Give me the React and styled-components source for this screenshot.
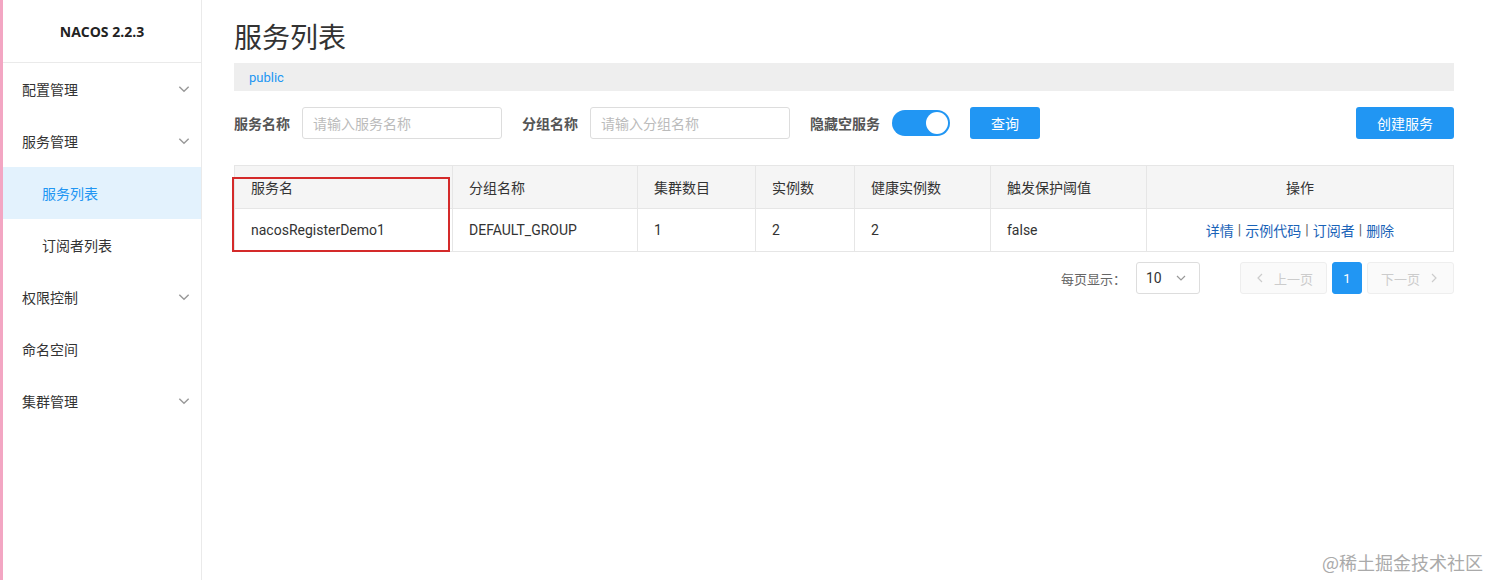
import styled, { createGlobalStyle } from "styled-components";

const GlobalStyle = createGlobalStyle`
  html, body {
    margin: 0;
    padding: 0;
    background: #fff;
    font-family: Roboto, "Noto Sans CJK SC", sans-serif;
    color: #333;
  }
`;

const Page = styled.div`
  display: flex;
  width: 1490px;
  height: 580px;
  border-left: 3px solid #f3a6c3;
  box-sizing: border-box;
  position: relative;
  overflow: hidden;
`;

const Sidebar = styled.aside`
  width: 198px;
  flex-shrink: 0;
  border-right: 1px solid #eaeaea;
`;

const Logo = styled.div`
  height: 62px;
  display: flex;
  align-items: center;
  justify-content: center;
  font-family: "Open Sans", "Noto Sans CJK SC", sans-serif;
  font-weight: 700;
  font-size: 14px;
  color: #222;
  border-bottom: 1px solid #eaeaea;
`;

const MenuItem = styled.div`
  height: 52px;
  display: flex;
  align-items: center;
  justify-content: space-between;
  padding: 0 10px 0 ${(p) => (p.sub ? 39 : 19)}px;
  font-size: 14px;
  color: ${(p) => (p.active ? "#2196f3" : "#333")};
  background: ${(p) => (p.active ? "#e3f2fd" : "transparent")};
`;

const Main = styled.main`
  flex: 1;
  padding: 0 36px 0 32px;
`;

const Title = styled.h1`
  margin: 0;
  height: 63px;
  display: flex;
  align-items: center;
  font-size: 28px;
  font-weight: 400;
  color: #333;
  padding-top: 8px;
  box-sizing: border-box;
`;

const Crumb = styled.div`
  height: 28px;
  background: #eee;
  display: flex;
  align-items: center;
  padding-left: 15px;
  font-size: 13px;
  color: #2196f3;
`;

const Filters = styled.div`
  display: flex;
  align-items: center;
  margin-top: 16px;
  height: 32px;
`;

const Label = styled.span`
  font-size: 14px;
  font-weight: 700;
  color: #555;
  margin-right: 12px;
`;

const Input = styled.div`
  width: 200px;
  height: 32px;
  box-sizing: border-box;
  border: 1px solid #ddd;
  border-radius: 3px;
  display: flex;
  align-items: center;
  padding-left: 10px;
  font-size: 14px;
  color: #bbb;
  margin-right: 20px;
`;

const Switch = styled.div`
  width: 58px;
  height: 26px;
  border-radius: 13px;
  background: #2196f3;
  position: relative;
  margin-right: 20px;

  &::after {
    content: "";
    position: absolute;
    right: 2px;
    top: 2px;
    width: 22px;
    height: 22px;
    border-radius: 50%;
    background: #fff;
  }
`;

const Button = styled.button`
  height: 32px;
  width: ${(p) => p.w}px;
  border: none;
  border-radius: 3px;
  background: #2196f3;
  color: #fff;
  font-family: inherit;
  font-size: 14px;
  padding: 0;
`;

const Spacer = styled.div`
  flex: 1;
`;

const Table = styled.div`
  margin-top: 26px;
  border: 1px solid #e6e6e6;
  position: relative;
`;

const Row = styled.div`
  display: grid;
  grid-template-columns: 217px 185px 118px 99px 136px 156px 1fr;
  height: 42px;
  background: ${(p) => (p.head ? "#f5f5f5" : "#fff")};
  & + & {
    border-top: 1px solid #e6e6e6;
  }
`;

const Cell = styled.div`
  display: flex;
  align-items: center;
  justify-content: ${(p) => (p.center ? "center" : "flex-start")};
  padding-left: ${(p) => (p.center ? 0 : 16)}px;
  font-size: 14px;
  color: #333;
  & + & {
    border-left: 1px solid #e6e6e6;
  }
`;

const Link = styled.a`
  color: #1a63b8;
  font-size: 14px;
`;

const Sep = styled.span`
  color: #666;
  margin: 0 4px;
`;

const Highlight = styled.div`
  position: absolute;
  left: -3px;
  top: 11px;
  width: 218px;
  height: 75px;
  border: 2px solid #d42a2a;
  box-sizing: border-box;
`;

const Pager = styled.div`
  display: flex;
  justify-content: flex-end;
  align-items: center;
  margin-top: 10px;
  height: 32px;
`;

const PagerLabel = styled.span`
  font-size: 13px;
  color: #666;
  margin-right: 10px;
`;

const Select = styled.div`
  width: 64px;
  height: 32px;
  box-sizing: border-box;
  border: 1px solid #ddd;
  border-radius: 3px;
  display: flex;
  align-items: center;
  justify-content: space-between;
  padding: 0 12px 0 9px;
  font-size: 14px;
  color: #333;
  margin-right: 35px;
`;

const PageBtn = styled.div`
  height: 32px;
  width: ${(p) => p.w}px;
  box-sizing: border-box;
  border: 1px solid ${(p) => (p.active ? "#2196f3" : "#eee")};
  background: ${(p) => (p.active ? "#2196f3" : "#fafafa")};
  color: ${(p) => (p.active ? "#fff" : "#ccc")};
  border-radius: 3px;
  display: flex;
  align-items: center;
  justify-content: center;
  gap: 8px;
  font-size: 13px;
  margin-left: 5px;
`;

const Watermark = styled.div`
  position: absolute;
  right: 7px;
  bottom: 5px;
  font-size: 18px;
  color: #aaa;
  font-family: "Noto Sans CJK SC", sans-serif;
`;

const Chevron = ({ dir = "down", color = "#999", size = 12 }) => {
  const d =
    dir === "down"
      ? "M2 4l4 4 4-4"
      : dir === "left"
      ? "M8 2L4 6l4 4"
      : "M4 2l4 4-4 4";
  return (
    <svg width={size} height={size} viewBox="0 0 12 12">
      <path d={d} fill="none" stroke={color} strokeWidth="1.2" />
    </svg>
  );
};

const menu = [
  { t: "配置管理", arrow: true },
  { t: "服务管理", arrow: true },
  { t: "服务列表", sub: true, active: true },
  { t: "订阅者列表", sub: true },
  { t: "权限控制", arrow: true },
  { t: "命名空间" },
  { t: "集群管理", arrow: true },
];

const heads = ["服务名", "分组名称", "集群数目", "实例数", "健康实例数", "触发保护阈值"];
const row = ["nacosRegisterDemo1", "DEFAULT_GROUP", "1", "2", "2", "false"];

export default function App() {
  return (
    <>
      <GlobalStyle />
      <Page>
        <Sidebar>
          <Logo>NACOS 2.2.3</Logo>
          {menu.map((m) => (
            <MenuItem key={m.t} sub={m.sub} active={m.active}>
              <span>{m.t}</span>
              {m.arrow && <Chevron size={14} />}
            </MenuItem>
          ))}
        </Sidebar>
        <Main>
          <Title>服务列表</Title>
          <Crumb>public</Crumb>
          <Filters>
            <Label>服务名称</Label>
            <Input>请输入服务名称</Input>
            <Label>分组名称</Label>
            <Input>请输入分组名称</Input>
            <Label>隐藏空服务</Label>
            <Switch />
            <Button w={70}>查询</Button>
            <Spacer />
            <Button w={98}>创建服务</Button>
          </Filters>
          <Table>
            <Row head>
              {heads.map((h) => (
                <Cell key={h}>{h}</Cell>
              ))}
              <Cell center>操作</Cell>
            </Row>
            <Row>
              {row.map((v, i) => (
                <Cell key={i}>{v}</Cell>
              ))}
              <Cell center>
                <Link>详情</Link>
                <Sep>|</Sep>
                <Link>示例代码</Link>
                <Sep>|</Sep>
                <Link>订阅者</Link>
                <Sep>|</Sep>
                <Link>删除</Link>
              </Cell>
            </Row>
            <Highlight />
          </Table>
          <Pager>
            <PagerLabel>每页显示：</PagerLabel>
            <Select>
              <span>10</span>
              <Chevron size={12} />
            </Select>
            <PageBtn w={87}>
              <Chevron dir="left" color="#ccc" />
              上一页
            </PageBtn>
            <PageBtn w={30} active>
              1
            </PageBtn>
            <PageBtn w={87}>
              下一页
              <Chevron dir="right" color="#ccc" />
            </PageBtn>
          </Pager>
        </Main>
        <Watermark>@稀土掘金技术社区</Watermark>
      </Page>
    </>
  );
}
